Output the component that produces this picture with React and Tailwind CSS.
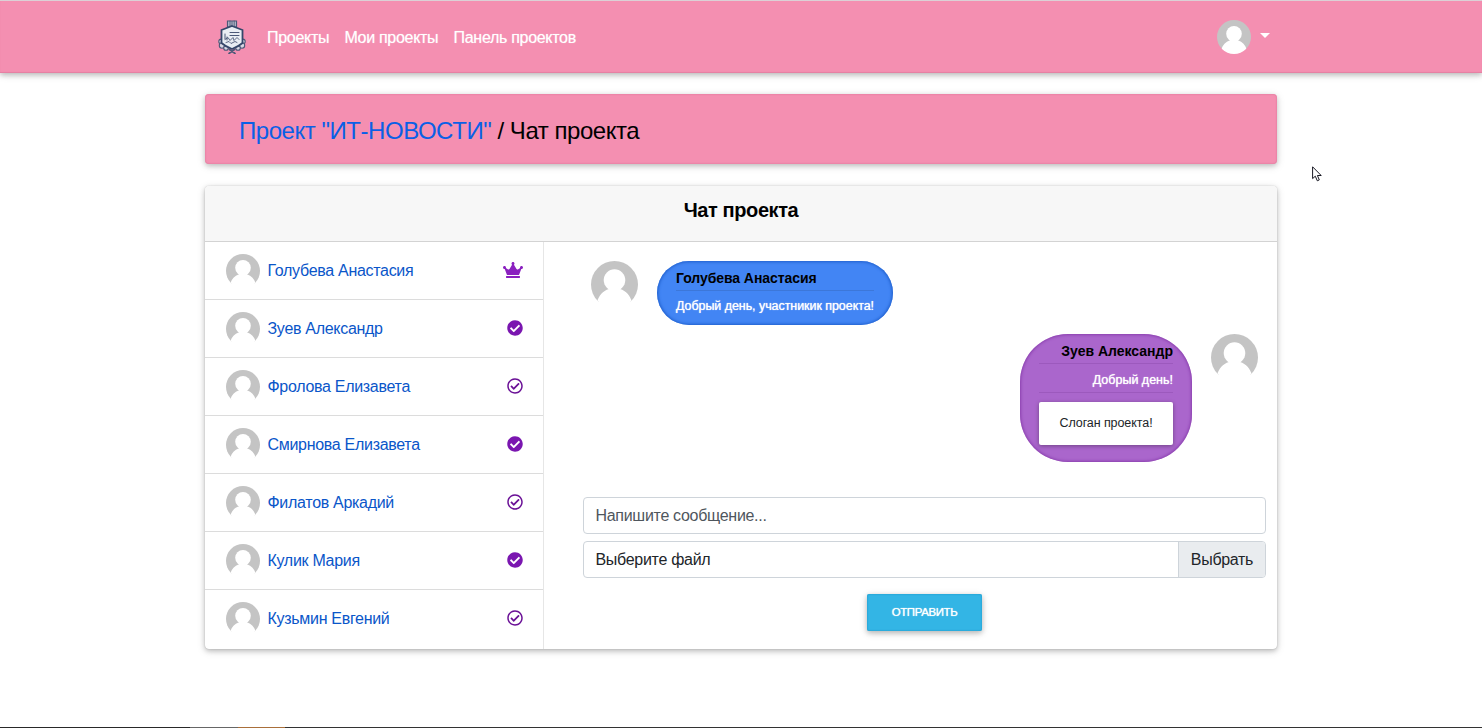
import { FaCrown, FaCheckCircle, FaRegCheckCircle } from "react-icons/fa";

const members = [
  { name: "Голубева Анастасия", status: "owner" },
  { name: "Зуев Александр", status: "active" },
  { name: "Фролова Елизавета", status: "pending" },
  { name: "Смирнова Елизавета", status: "active" },
  { name: "Филатов Аркадий", status: "pending" },
  { name: "Кулик Мария", status: "active" },
  { name: "Кузьмин Евгений", status: "pending" },
];

function Avatar({ className, id }) {
  return (
    <svg viewBox="0 0 34 34" className={className}>
      <clipPath id={id}>
        <circle cx="17" cy="17" r="17" />
      </clipPath>
      <g clipPath={`url(#${id})`}>
        <path d="M0 0H34V29.4H0Z" fill="#c4c4c4" />
        <circle cx="17" cy="13.8" r="7.8" fill="#fff" />
        <path d="M13 18H21V20.2C25.5 21.6 28.3 25 29.6 29.3L34 29V34H0V29L4.4 29.3C5.7 25 8.5 21.6 13 20.2Z" fill="#fff" />
      </g>
    </svg>
  );
}

function Crest() {
  return (
    <svg viewBox="0 0 28 34" className="h-[34px] w-7">
      <g fill="none" stroke="#4b5877" strokeLinecap="round">
        <g fill="#d9d7e3" strokeWidth="1.1">
          <circle cx="3.2" cy="21.5" r="2.4" />
          <circle cx="24.8" cy="21.5" r="2.4" />
          <circle cx="4" cy="25.5" r="2.7" />
          <circle cx="24" cy="25.5" r="2.7" />
          <circle cx="8" cy="28" r="2.3" />
          <circle cx="20" cy="28" r="2.3" />
        </g>
        <path d="M11.5 29.5 17 33.5M16.5 29.5 11 33.5" strokeWidth="1.6" />
        <path d="M9.5 1h9v6h-9z" fill="#b9bacb" strokeWidth="1.2" />
        <path d="M12 1v5M14 1.5v5M16.2 1v5" strokeWidth=".9" />
        <path d="M14 6 24.5 10V23Q20.5 26.5 14 29 7.5 26.5 3.5 23V10Z" fill="#e9edf3" stroke="#35476a" strokeWidth="1.8" />
        <path d="M12 12.5h9M12 15.5h9M7 14v5M9 17v3" strokeWidth="1" />
        <path d="M7 19.5l3-2 2 3 3-3 1 3 3-3 2 2M8 22.5l3-1 2 2 4-2 2 1" strokeWidth=".9" />
      </g>
    </svg>
  );
}

function StatusIcon({ status }) {
  if (status === "owner") return <FaCrown className="h-4 w-5 text-[#8a20bf]" />;
  if (status === "active") return <FaCheckCircle className="size-4 text-[#7a16b0]" />;
  return <FaRegCheckCircle className="size-4 text-[#6a1096]" />;
}

export default function App() {
  return (
    <div className="relative flex h-[728px] w-[1482px] flex-col overflow-hidden bg-white font-['Liberation_Sans',Arial,sans-serif] text-base tracking-[-0.3px] text-[#212529]">
      <header className="h-[73px] shrink-0 border-t border-[#dcd0d6] bg-[#f48fb1] shadow-[inset_0_-1px_1px_#e57fa2,0_2px_5px_rgba(0,0,0,0.18),0_2px_8px_rgba(0,0,0,0.14)]">
        <div className="mx-auto flex h-full w-[1046px] items-center">
          <Crest />
          <nav className="mt-px ml-[21px] flex gap-[15.3px] pt-px text-white [text-shadow:0_0_1px_rgba(255,255,255,0.6)]">
            <a>Проекты</a>
            <a>Мои проекты</a>
            <a>Панель проектов</a>
          </nav>
          <div className="mr-[-5.5px] ml-auto flex items-center gap-[8.5px]">
            <Avatar id="avatar-user" className="size-[34px]" />
            <svg viewBox="0 0 10 5" className="mb-1 h-[5px] w-[10px]">
              <path d="M0 0h10L5 5z" fill="#fff" />
            </svg>
          </div>
        </div>
      </header>

      <main className="mx-auto flex w-[1072px] flex-col pt-[21px]">
        <h1 className="flex h-[70px] items-center rounded bg-[#f48fb1] pt-[3px] pl-[34px] text-[24px] tracking-[-0.46px] whitespace-pre text-black shadow-[inset_0_0_2px_#d66c91,0_2px_5px_rgba(0,0,0,0.18),0_2px_10px_rgba(0,0,0,0.12)]">
          <a className="text-[#0a60e6]">Проект "ИТ-НОВОСТИ"</a> / Чат проекта
        </h1>

        <section className="mt-[22px] flex h-[463px] flex-col overflow-hidden rounded bg-white shadow-[0_0_1px_rgba(0,0,0,0.3),0_2px_5px_rgba(0,0,0,0.2),0_2px_10px_rgba(0,0,0,0.12)]">
          <h2 className="flex h-14 shrink-0 items-center justify-center border-b border-[#d3d3d3] bg-[#f7f7f7] pb-[7px] text-[20px] font-bold tracking-[-0.4px] text-black">
            Чат проекта
          </h2>
          <div className="flex min-h-0 flex-1">
            <ul className="w-[339px] shrink-0 border-r border-[#e6e6e6]">
              {members.map((m, i) => (
                <li key={m.name} className="flex h-[58px] items-center border-b border-[#dcdcdc] pr-[20px] pl-[20.5px] last:border-transparent">
                  <Avatar id={`avatar-member-${i}`} className="mt-px size-[34px]" />
                  <a className="mt-px ml-2 text-[#0a56c9]">{m.name}</a>
                  <span className="mb-px ml-auto">
                    <StatusIcon status={m.status} />
                  </span>
                </li>
              ))}
            </ul>

            <div className="flex flex-1 flex-col pr-[11px] pl-[39px]">
              <div className="flex items-start gap-[19px] pt-[19px] pl-2">
                <Avatar id="avatar-message-1" className="size-[47px]" />
                <div className="h-16 w-[236px] rounded-[32px] bg-[#4285f4] px-[19px] pt-2 shadow-[inset_0_0_3px_1px_#1f5fcc]">
                  <p className="border-b border-[#3c77d9] pb-[3px] text-[14px] leading-[18px] font-bold tracking-[-0.07px] whitespace-nowrap text-black">Голубева Анастасия</p>
                  <p className="mt-[7px] text-[12.5px] leading-4 tracking-[-0.06px] whitespace-nowrap text-white [text-shadow:0_0_1px_white]">Добрый день, участникик проекта!</p>
                </div>
              </div>
              <div className="mt-[9px] flex items-start justify-end gap-[19px] pr-2">
                <div className="h-32 w-[172px] rounded-[48px] bg-[#aa66cc] px-[19px] pt-2 text-right shadow-[inset_0_0_3px_1px_#8a3fae]">
                  <p className="border-b border-[#9c59bd] pb-[3px] text-[14px] leading-[18px] font-bold tracking-[0px] whitespace-nowrap text-black">Зуев Александр</p>
                  <p className="mt-2 border-b border-[#9c59bd] pb-[4px] text-[12.5px] leading-4 tracking-[0px] whitespace-nowrap text-white [text-shadow:0_0_1px_white]">Добрый день!</p>
                  <div className="mt-[9px] flex h-[43px] items-center justify-center rounded-[2px] bg-white text-[12.5px] tracking-[-0.08px] shadow-[0_1px_4px_rgba(0,0,0,0.35)]">Слоган проекта!</div>
                </div>
                <Avatar id="avatar-message-2" className="size-[47px]" />
              </div>

              <form className="mt-[35px] flex flex-col items-center">
                <div className="flex h-[37px] w-full items-center rounded border border-[#ced4da] px-[11.5px] text-[#4f565d]">Напишите сообщение...</div>
                <div className="mt-[7px] flex h-[37px] w-full items-stretch overflow-hidden rounded border border-[#ced4da]">
                  <span className="flex flex-1 items-center pl-[11.5px]">Выберите файл</span>
                  <span className="flex w-[87px] items-center justify-center border-l border-[#ced4da] bg-[#e9ecef]">Выбрать</span>
                </div>
                <button type="button" className="mt-4 h-[37px] w-[115px] rounded-[2px] bg-[#33b5e5] text-[11.5px] tracking-[-0.4px] text-white shadow-[inset_0_0_2px_#1590c0,0_2px_5px_rgba(0,0,0,0.2),0_2px_8px_rgba(0,0,0,0.14)] [text-shadow:0_0_1px_white]">
                  ОТПРАВИТЬ
                </button>
              </form>
            </div>
          </div>
        </section>
      </main>

      <svg viewBox="0 0 10 16" className="absolute top-[166px] left-[1312px] h-4 w-[10px]">
        <path d="M.6.8V12.6L3.3 10.2 5.3 14.8 7.3 13.9 5.4 9.5H9.2Z" fill="#fff" stroke="#171722" strokeWidth="1" />
      </svg>

      <footer className="mt-auto flex h-px shrink-0 bg-[#333]">
        <span className="w-[190px] bg-[#292929]" />
        <span className="w-12 bg-[#666]" />
        <span className="w-[47px] bg-[#a96f3a]" />
      </footer>
    </div>
  );
}
